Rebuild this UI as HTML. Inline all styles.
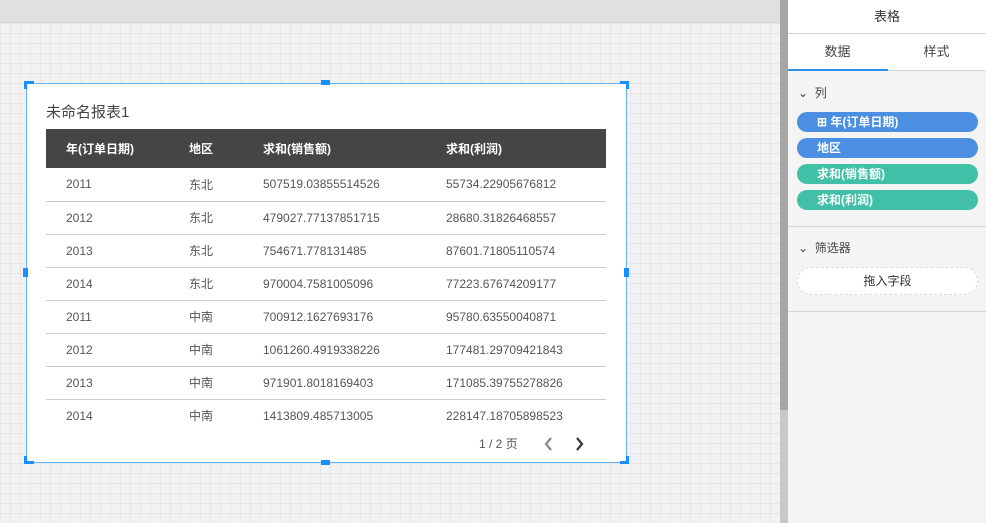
<!DOCTYPE html>
<html><head><meta charset="utf-8"><style>
*{margin:0;padding:0;box-sizing:border-box}
body{width:986px;height:523px;overflow:hidden;position:relative;font-family:"Liberation Sans","Noto Sans CJK SC",sans-serif;background-color:#f2f2f2;
background-image:linear-gradient(#e6e6e6 1px,transparent 1px),linear-gradient(90deg,#e6e6e6 1px,transparent 1px);background-size:10px 10px;background-position:0 3px}
.top{position:absolute;left:0;top:0;width:780px;height:23px;background:#e0e0e0;border-bottom:1px solid #d6d6d6}
.sb{position:absolute;left:780px;top:0;width:8px;height:523px;background:#c8c8c8}
.sb div{position:absolute;left:0;top:0;width:8px;height:410px;background:#a6a6a6}
.card{position:absolute;left:26px;top:83px;width:601px;height:380px;background:#fff;border:1px solid #64b4f4}
.h{position:absolute;background:#1890ff}
.title{position:absolute;left:19px;top:17px;font-size:15px;color:#444}
table{position:absolute;left:19px;top:45px;width:560px;border-collapse:collapse;font-size:12px;color:#555;table-layout:fixed}
th{background:#454545;color:#fff;font-weight:bold;text-align:left;height:39px;padding:0}
td{height:33px;border-bottom:1px solid #ccc;padding:0}
tr:last-child td{border-bottom:none}
th:first-child,td:first-child{padding-left:20px}
.pg{position:absolute;left:452px;top:351px;font-size:12px;color:#555}
.panel{position:absolute;left:788px;top:0;width:198px;height:523px;background:#f4f4f4}
.ph{height:34px;background:#fff;border-bottom:1px solid #d4d4d4;text-align:center;line-height:33px;font-size:13px;color:#333}
.tabs{height:37px;background:#fff;border-bottom:1px solid #d4d4d4;display:flex;font-size:13px;color:#444;position:relative}
.tabs div{flex:1;text-align:center;line-height:36px}
.sec{font-size:12px;color:#444;position:absolute;left:10px}
.pill{position:absolute;left:9px;width:181px;height:20px;border-radius:10px;color:#fff;font-size:12px;font-weight:bold;line-height:20px;padding-left:20px}
</style></head><body>
<div class="top"></div>
<div class="sb"><div></div></div>
<div class="card">
<div class="title">未命名报表1</div>
<table>
<colgroup><col style="width:143px"><col style="width:74px"><col style="width:183px"><col></colgroup>
<tr><th>年(订单日期)</th><th>地区</th><th>求和(销售额)</th><th>求和(利润)</th></tr>
<tr><td>2011</td><td>东北</td><td>507519.03855514526</td><td>55734.22905676812</td></tr>
<tr><td>2012</td><td>东北</td><td>479027.77137851715</td><td>28680.31826468557</td></tr>
<tr><td>2013</td><td>东北</td><td>754671.778131485</td><td>87601.71805110574</td></tr>
<tr><td>2014</td><td>东北</td><td>970004.7581005096</td><td>77223.67674209177</td></tr>
<tr><td>2011</td><td>中南</td><td>700912.1627693176</td><td>95780.63550040871</td></tr>
<tr><td>2012</td><td>中南</td><td>1061260.4919338226</td><td>177481.29709421843</td></tr>
<tr><td>2013</td><td>中南</td><td>971901.8018169403</td><td>171085.39755278826</td></tr>
<tr><td>2014</td><td>中南</td><td>1413809.485713005</td><td>228147.18705898523</td></tr>
</table>
<div class="pg">1 / 2 页</div>
<svg style="position:absolute;left:514px;top:351px" width="50" height="18"><path d="M10 3 L5 9 L10 15" stroke="#888" stroke-width="2.2" fill="none"/><path d="M36 3 L41 9 L36 15" stroke="#333" stroke-width="2.2" fill="none"/></svg>
</div>
<div class="h" style="left:24px;top:81px;width:10px;height:3px"></div><div class="h" style="left:24px;top:81px;width:3px;height:8px"></div>
<div class="h" style="left:620px;top:81px;width:9px;height:3px"></div><div class="h" style="left:626px;top:81px;width:3px;height:8px"></div>
<div class="h" style="left:24px;top:461px;width:10px;height:3px"></div><div class="h" style="left:24px;top:456px;width:3px;height:8px"></div>
<div class="h" style="left:620px;top:461px;width:9px;height:3px"></div><div class="h" style="left:626px;top:456px;width:3px;height:8px"></div>
<div class="h" style="left:321px;top:80px;width:9px;height:5px"></div><div class="h" style="left:321px;top:460px;width:9px;height:5px"></div>
<div class="h" style="left:23px;top:268px;width:5px;height:9px"></div><div class="h" style="left:624px;top:268px;width:5px;height:9px"></div>
<div class="panel">
<div class="ph">表格</div>
<div class="tabs"><div>数据</div><div>样式</div><span style="position:absolute;left:0;bottom:-1px;width:100px;height:2px;background:#2f8de4"></span></div>
<div class="sec" style="top:84px">⌄&nbsp; 列</div>
<div class="pill" style="top:112px;background:#4a8fe2">⊞ 年(订单日期)</div>
<div class="pill" style="top:138px;background:#4a8fe2">地区</div>
<div class="pill" style="top:164px;background:#40c0a6">求和(销售额)</div>
<div class="pill" style="top:190px;background:#40c0a6">求和(利润)</div>
<div style="position:absolute;left:0;top:226px;width:198px;height:1px;background:#d4d4d4"></div>
<div class="sec" style="top:239px">⌄&nbsp; 筛选器</div>
<div style="position:absolute;left:9px;top:267px;width:181px;height:28px;border-radius:14px;background:#fff;border:1px dashed #ddd;text-align:center;line-height:26px;font-size:12px;color:#333">拖入字段</div>
<div style="position:absolute;left:0;top:311px;width:198px;height:1px;background:#d4d4d4"></div>
</div>
</body></html>
